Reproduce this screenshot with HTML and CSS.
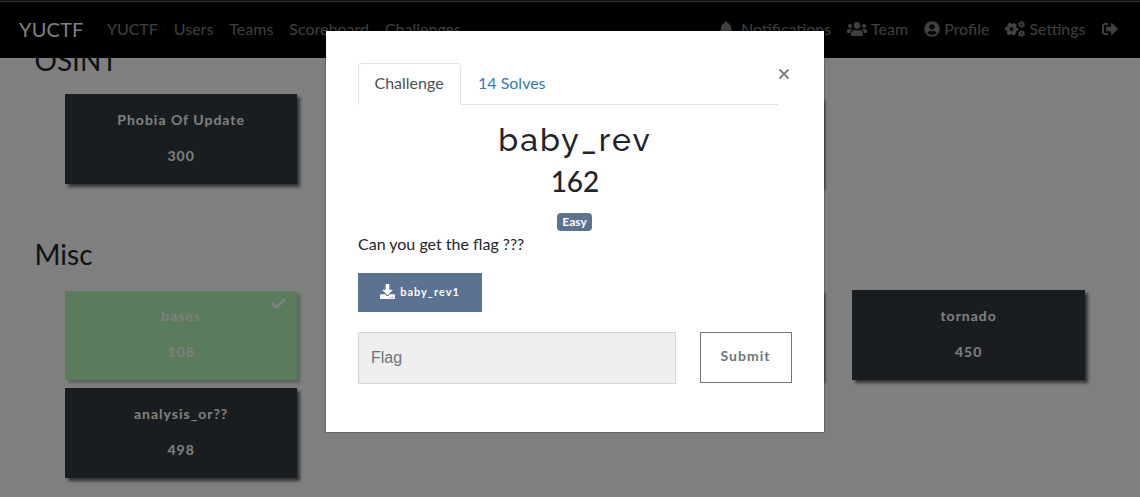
FILE: index.html
```
<!DOCTYPE html>
<html lang="en">
<head>
<meta charset="utf-8">
<title>YUCTF</title>
<link rel="stylesheet" href="styles.css">
</head>
<body>
<nav class="navbar">
  <a class="brand">YUCTF</a>
  <div class="links">
    <a>YUCTF</a><a>Users</a><a>Teams</a><a>Scoreboard</a><a>Challenges</a>
  </div>
  <div class="links account">
    <a class="notif"><svg class="icon w14" viewBox="0 0 448 512"><path d="M224 512c35.320 0 63.970-28.650 63.970-64H160.030c0 35.350 28.650 64 63.970 64zm215.390-149.710c-19.320-20.760-55.470-51.990-55.470-154.290 0-77.700-54.480-139.900-127.940-155.160V32c0-17.670-14.320-32-31.980-32s-31.980 14.330-31.980 32v20.840C118.560 68.100 64.080 130.300 64.080 208c0 102.300-36.150 133.530-55.470 154.290-6 6.450-8.660 14.160-8.610 21.710.11 16.400 12.980 32 32.100 32h383.800c19.120 0 32-15.600 32.100-32 .05-7.550-2.610-15.270-8.610-21.710z"/></svg>Notifications</a>
    <a><svg class="icon w20" viewBox="0 0 640 512"><path d="M96 224c35.300 0 64-28.700 64-64s-28.700-64-64-64-64 28.700-64 64 28.700 64 64 64zm448 0c35.300 0 64-28.700 64-64s-28.700-64-64-64-64 28.700-64 64 28.700 64 64 64zm32 32h-64c-17.600 0-33.500 7.100-45.100 18.600 40.300 22.100 68.900 62 75.100 109.400h66c17.700 0 32-14.300 32-32v-32c0-35.300-28.700-64-64-64zm-256 0c61.900 0 112-50.100 112-112S381.900 32 320 32 208 82.100 208 144s50.100 112 112 112zm76.800 32h-8.300c-20.800 10-43.900 16-68.500 16s-47.600-6-68.500-16h-8.300C179.600 288 128 339.600 128 403.200V432c0 26.500 21.500 48 48 48h288c26.500 0 48-21.500 48-48v-28.800c0-63.600-51.600-115.200-115.200-115.200zm-223.700-13.400C161.500 263.100 145.600 256 128 256H64c-35.300 0-64 28.700-64 64v32c0 17.700 14.300 32 32 32h65.900c6.300-47.400 34.900-87.300 75.200-109.400z"/></svg>Team</a>
    <a><svg class="icon w16" viewBox="0 0 496 512"><path d="M248 8C111 8 0 119 0 256s111 248 248 248 248-111 248-248S385 8 248 8zm0 96c48.600 0 88 39.400 88 88s-39.400 88-88 88-88-39.400-88-88 39.400-88 88-88zm0 344c-58.700 0-111.300-26.600-146.500-68.200 18.800-35.400 55.600-59.800 98.500-59.800 2.400 0 4.800.4 7.100 1.100 13 4.200 26.600 6.900 40.900 6.900s28-2.700 40.900-6.900c2.300-.7 4.700-1.100 7.100-1.100 42.900 0 79.700 24.400 98.500 59.800C359.300 421.400 306.700 448 248 448z"/></svg>Profile</a>
    <a><svg class="icon w20" viewBox="0 0 640 512"><g fill="none" stroke="currentColor"><circle cx="210" cy="256" r="114" stroke-width="108"/><circle cx="210" cy="256" r="180" stroke-width="56" stroke-dasharray="110.500 78" stroke-dashoffset="55"/><circle cx="530" cy="112" r="56" stroke-width="50"/><circle cx="530" cy="112" r="92" stroke-width="34" stroke-dasharray="54 42.340"/><circle cx="530" cy="400" r="56" stroke-width="50"/><circle cx="530" cy="400" r="92" stroke-width="34" stroke-dasharray="54 42.340"/></g></svg>Settings</a>
    <a class="logout"><svg class="icon w16" viewBox="0 0 512 512"><path d="M497 273L329 441c-15 15-41 4.500-41-17v-96H152c-13.300 0-24-10.700-24-24v-96c0-13.300 10.700-24 24-24h136V88c0-21.400 25.900-32 41-17l168 168c9.300 9.400 9.300 24.600 0 34zM192 436v-40c0-6.600-5.400-12-12-12H96c-17.700 0-32-14.300-32-32V160c0-17.700 14.300-32 32-32h84c6.600 0 12-5.400 12-12V76c0-6.600-5.400-12-12-12H96c-53 0-96 43-96 96v192c0 53 43 96 96 96h84c6.600 0 12-5.400 12-12z"/></svg></a>
  </div>
</nav>

<main class="board">
  <h3 class="osint">OSINT</h3>
  <div class="grid">
    <div class="card"><p>Phobia Of Update</p><span>300</span></div>
    <div class="card"></div>
    <div class="card low"></div>
  </div>
  <h3 class="misc">Misc</h3>
  <div class="grid">
    <div class="card solved"><svg class="check" viewBox="0 0 512 512"><path d="M173.900 439.400l-166.400-166.400c-10-10-10-26.200 0-36.200l36.200-36.200c10-10 26.200-10 36.200 0L192 312.700 432.100 72.600c10-10 26.200-10 36.200 0l36.200 36.200c10 10 10 26.200 0 36.200L210.100 439.400c-10 10-26.200 10-36.200 0z"/></svg><p>bases</p><span>108</span></div>
    <div class="card"></div>
    <div class="card"></div>
    <div class="card"><p>tornado</p><span>450</span></div>
    <div class="card"><p>analysis_or??</p><span>498</span></div>
  </div>
</main>

<div class="backdrop">
  <section class="modal">
    <div class="top">
      <div class="tabs"><a class="tab active">Challenge</a><a class="tab">14 Solves</a></div>
      <svg class="close" viewBox="0 0 12 12"><path d="M1.500 1.500l9 9M10.500 1.500l-9 9"/></svg>
    </div>
    <h2 class="name">baby_rev</h2>
    <h3 class="value">162</h3>
    <div class="tags"><span class="badge">Easy</span></div>
    <p class="desc">Can you get the flag ???</p>
    <a class="download"><svg viewBox="0 0 512 512"><path d="M216 0h80c13.300 0 24 10.700 24 24v168h87.700c17.800 0 26.700 21.500 14.100 34.100L269.700 378.300c-7.500 7.500-19.800 7.500-27.300 0L90.100 226.100c-12.600-12.600-3.700-34.100 14.100-34.100H192V24c0-13.300 10.700-24 24-24zm296 376v112c0 13.300-10.700 24-24 24H24c-13.300 0-24-10.700-24-24V376c0-13.300 10.700-24 24-24h146.700l49 49c20.100 20.100 52.500 20.100 72.600 0l49-49H488c13.300 0 24 10.700 24 24zm-124 88c0-11-9-20-20-20s-20 9-20 20 9 20 20 20 20-9 20-20zm64 0c0-11-9-20-20-20s-20 9-20 20 9 20 20 20 20-9 20-20z"/></svg>baby_rev1</a>
    <div class="answer">
      <input class="flag" placeholder="Flag">
      <button class="submit">Submit</button>
    </div>
  </section>
</div>
</body>
</html>
```

FILE: styles.css
```
* { box-sizing: border-box; }
body {
  margin: 0;
  height: 497px;
  overflow: hidden;
  background: #fff;
  color: #212529;
  font: 16px/24px Lato, sans-serif;
}
h2, h3, p { margin: 0; font-weight: 400; }

.navbar {
  position: relative;
  z-index: 1;
  display: flex;
  align-items: center;
  height: 58px;
  padding: 0 14.500px 0 19px;
  color: rgba(255, 255, 255, .5);
  background: linear-gradient(#101428 1px, #6c6c74 1px, #6c6c74 2px, #000 2px);
}
.brand { margin-right: 15.500px; padding-bottom: 1px; color: #fff; font-size: 20px; line-height: 30px; letter-spacing: .15px; }
.links { display: flex; }
.links a { display: flex; align-items: center; padding: 0 8px; white-space: nowrap; }
.account { margin-left: auto; }
.icon { height: 16px; margin-right: 4px; fill: currentColor; }
.w14 { width: 14px; }
.w16 { width: 16px; }
.w20 { width: 20px; }
.notif .icon { margin-right: 8px; }
.logout .icon { margin-right: 0; }

.board { padding: 0 35px; }
.board h3 { margin-left: -.5px; font-size: 28px; line-height: 34px; }
.board .osint { margin-top: -15px; }
.board .misc { margin-top: 53px; }
.grid {
  display: grid;
  grid-template-columns: repeat(4, 232.500px);
  gap: 8px 30px;
  padding: 17px 30px 0 29.900px;
}
.misc + .grid { padding-top: 19px; }
.card {
  position: relative;
  height: 90px;
  padding: 14px 0 0;
  background: #343a40;
  box-shadow: 3px 3px 3px rgba(0, 0, 0, .6);
  color: #fff;
  font-size: 14px;
  font-weight: 700;
  letter-spacing: 1px;
  text-align: center;
}
.card p { margin-bottom: 12px; font-weight: 700; }
.card.low { top: 3px; }
.card.solved {
  height: 89px;
  margin-top: 1px;
  padding-top: 13px;
  background: #b4f6b8;
  box-shadow: 3px 3px 3px rgba(0, 0, 0, .25);
}
.check { position: absolute; top: 5px; right: 11px; width: 15px; height: 15px; fill: #fff; }

.backdrop {
  position: fixed;
  z-index: 2;
  inset: 0;
  padding-top: 30px;
  background: rgba(0, 0, 0, .5);
}
.modal {
  width: 500px;
  height: 403px;
  margin-left: 325px;
  padding: 32px;
  border: 1px solid rgba(0, 0, 0, .2);
  background: #fff;
  background-clip: padding-box;
}
.top { display: flex; }
.tabs { display: flex; width: 420px; height: 42px; border-bottom: 1px solid #dee2e6; }
.tab { height: 42px; padding: 7px 16px 9px; border: 1px solid transparent; color: #337ab7; }
.tab.active {
  width: 103px;
  padding-left: 15.500px;
  border-color: #dee2e6 #dee2e6 #fff;
  border-radius: 4px 4px 0 0;
  background: #fff;
  color: #495057;
}
.close { width: 12px; height: 12px; margin: 5px 0 0; fill: none; stroke: #808080; stroke-width: 2; }
.name {
  padding-top: 16px;
  font-family: Raleway, Lato, sans-serif;
  font-size: 32px;
  font-weight: 500;
  line-height: 38px;
  letter-spacing: 2px;
  text-align: center;
}
.value { padding-top: 5px; font-size: 28px; font-weight: 500; line-height: 34px; text-align: center; }
.tags { display: flex; justify-content: center; padding: 15px 1px 0 0; }
.badge {
  width: 35px;
  height: 18px;
  border-radius: 4px;
  background: #5b7290;
  color: #fff;
  font-size: 12px;
  font-weight: 700;
  line-height: 18px;
  text-align: center;
}
.desc { padding-top: 1px; }
.download {
  display: flex;
  align-items: center;
  justify-content: center;
  width: 124px;
  height: 39px;
  margin-top: 17px;
  padding-bottom: 2px;
  background: #5b7290;
  color: #fff;
  font-size: 11px;
  font-weight: 700;
  letter-spacing: 1px;
}
.download svg { width: 15px; height: 15px; margin-right: 5px; fill: #fff; }
.answer { display: flex; gap: 24px; margin-top: 20px; }
.flag {
  width: 318px;
  height: 52px;
  padding: 0 12px;
  border: 1px solid #ced4da;
  background: #efefef;
  font: 16px "Liberation Sans", sans-serif;
}
.flag::placeholder { color: #6c757d; }
.submit {
  width: 92px;
  height: 51px;
  padding: 0 1px 4px 0;
  border: 1px solid #6c757d;
  background: #fff;
  color: #6c757d;
  font: 700 14px Lato, sans-serif;
  letter-spacing: 1.050px;
}
```
